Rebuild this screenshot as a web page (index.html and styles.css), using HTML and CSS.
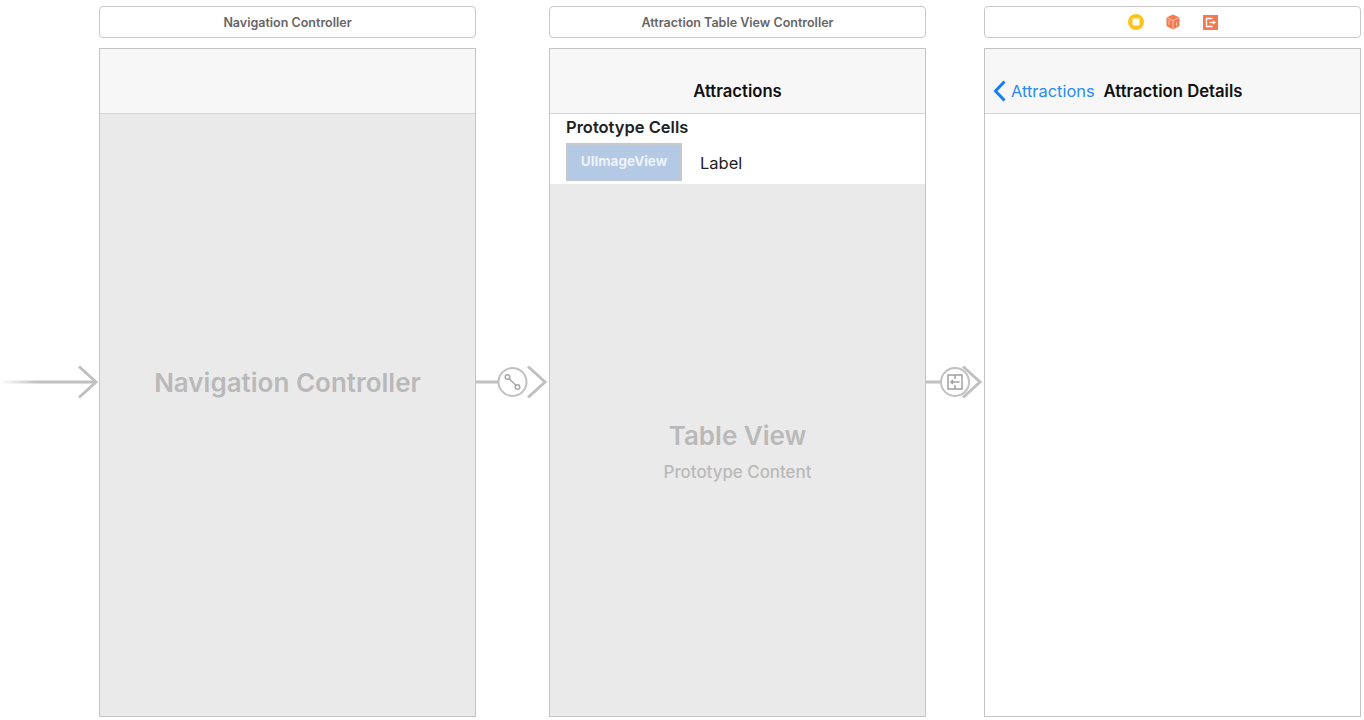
FILE: index.html
```html
<!DOCTYPE html>
<html lang="en">
<head>
  <meta charset="UTF-8" />
  <title>Storyboard</title>
  <link rel="stylesheet" href="styles.css">
</head>
<body>
  <div class="canvas">

    <!-- Entry arrow -->
    <div class="segue segue-entry">
      <svg width="99" height="40" viewBox="0 0 99 40">
        <defs>
          <linearGradient id="fade" x1="0" x2="1" y1="0" y2="0">
            <stop offset="0" stop-color="#c0c0c0" stop-opacity="0"/>
            <stop offset="0.4" stop-color="#c0c0c0"/>
          </linearGradient>
        </defs>
        <rect x="0" y="18.500" width="95" height="3" fill="url(#fade)"/>
        <path d="M79 4.500 L96 20 L79 35.500" fill="none" stroke="#c0c0c0" stroke-width="3"/>
      </svg>
    </div>

    <!-- Navigation Controller -->
    <div class="scene">
      <div class="scene-title">Navigation Controller</div>
      <div class="screen">
        <div class="navbar"></div>
        <div class="placeholder placeholder-nav">
          <div class="placeholder-big">Navigation Controller</div>
        </div>
      </div>
    </div>

    <div class="segue segue-push">
      <svg width="73" height="40" viewBox="0 0 73 40">
        <rect x="0" y="18.500" width="22" height="3" fill="#c0c0c0"/>
        <circle cx="36.500" cy="20" r="14" fill="#fff" stroke="#c0c0c0" stroke-width="2"/>
        <circle cx="31.500" cy="15" r="2.300" fill="none" stroke="#a8a8a8" stroke-width="1.500"/>
        <circle cx="41.500" cy="25" r="2.300" fill="none" stroke="#a8a8a8" stroke-width="1.500"/>
        <path d="M33.200 16.700 L39.800 23.300" stroke="#a8a8a8" stroke-width="1.500"/>
        <path d="M52 4.500 L69 20 L52 35.500" fill="none" stroke="#c0c0c0" stroke-width="3"/>
      </svg>
    </div>

    <!-- Attraction Table View Controller -->
    <div class="scene">
      <div class="scene-title">Attraction Table View Controller</div>
      <div class="screen">
        <div class="navbar">
          <span class="nav-title">Attractions</span>
        </div>
        <div class="cells">
          <div class="cells-head">Prototype Cells</div>
          <div class="cell">
            <div class="image-view">UIImageView</div>
            <div class="cell-label">Label</div>
          </div>
        </div>
        <div class="placeholder placeholder-table">
          <div class="placeholder-big">Table View</div>
          <div class="placeholder-small">Prototype Content</div>
        </div>
      </div>
    </div>

    <div class="segue segue-show">
      <svg width="58" height="40" viewBox="0 0 58 40">
        <rect x="0" y="18.500" width="16" height="3" fill="#c0c0c0"/>
        <path d="M37 4.500 L54 20 L37 35.500" fill="none" stroke="#c0c0c0" stroke-width="3"/>
        <circle cx="29" cy="20" r="14" fill="#fff" stroke="#c0c0c0" stroke-width="2"/>
        <rect x="22" y="13" width="14" height="14" fill="none" stroke="#a0a0a0" stroke-width="1.500"/>
        <path d="M29 13 V17 M29 23 V27 M33.500 20 H25 M27 18 L25 20 L27 22" fill="none" stroke="#a0a0a0" stroke-width="1.500"/>
      </svg>
    </div>

    <!-- Attraction Details -->
    <div class="scene">
      <div class="scene-title scene-icons">
        <svg width="16" height="16" viewBox="0 0 16 16">
          <circle cx="8" cy="8" r="8" fill="#fcc419"/>
          <rect x="4.500" y="4.500" width="7" height="7" rx="1" fill="#fff"/>
        </svg>
        <svg width="16" height="16" viewBox="0 0 16 16">
          <path d="M8 0.500 L14.500 3.500 V12 L8 15.500 L1.500 12 V3.500 Z" fill="#f5794f"/>
          <path d="M1.500 3.500 L8 6.500 L14.500 3.500 M8 6.500 V15.500 M4 6 V11 M11.500 8 V12" fill="none" stroke="#fbd3c4" stroke-width="0.800"/>
        </svg>
        <svg class="icon-exit" width="15" height="15" viewBox="0 0 15 15">
          <rect width="15" height="15" fill="#f5794f"/>
          <path d="M9.500 3.500 H3.500 V11.500 H9.500" fill="none" stroke="#fff" stroke-width="1.300"/>
          <path d="M6.500 7.500 H10.500" stroke="#fff" stroke-width="1.300"/>
          <path d="M10 5.500 L13 7.500 L10 9.500 Z" fill="#fff"/>
        </svg>
      </div>
      <div class="screen screen-white">
        <div class="navbar navbar-back">
          <svg class="back-chevron" width="14" height="22" viewBox="0 0 14 22">
            <path d="M11.500 1.500 L2.500 11 L11.500 20.500" fill="none" stroke="#147efb" stroke-width="3"/>
          </svg>
          <span class="back-text">Attractions</span>
          <span class="nav-title">Attraction Details</span>
        </div>
      </div>
    </div>

  </div>
</body>
</html>
```

FILE: styles.css
```css
html, body {
  margin: 0;
  height: 720px;
  overflow: hidden;
  background: #fff;
  font-family: Inter, "Liberation Sans", sans-serif;
}
.canvas {
  display: flex;
  align-items: flex-start;
  padding-top: 6px;
}
.scene {
  width: 377px;
  flex: none;
  display: flex;
  flex-direction: column;
  gap: 10px;
}
.scene-title {
  box-sizing: border-box;
  height: 32px;
  border: 1px solid #c8c8c8;
  border-radius: 4px;
  display: flex;
  align-items: center;
  justify-content: center;
  padding-top: 1px;
  font-size: 12.500px;
  font-weight: 600;
  color: #666;
}
.scene-icons {
  gap: 21px;
  padding-top: 0;
}
.icon-exit {
  margin-left: 1px;
}
.screen {
  box-sizing: border-box;
  height: 669px;
  border: 1px solid #c4c4c4;
  background: #eaeaea;
  display: flex;
  flex-direction: column;
}
.screen-white {
  background: #fff;
}
.navbar {
  box-sizing: border-box;
  height: 65px;
  flex: none;
  background: #f7f7f7;
  border-bottom: 1px solid #d6d6d6;
  display: flex;
  align-items: flex-end;
  justify-content: center;
  padding-bottom: 12px;
}
.nav-title {
  font-size: 16.700px;
  font-weight: 600;
  line-height: 20px;
  color: #111;
}
.navbar-back {
  justify-content: flex-start;
  padding-left: 8px;
}
.back-chevron {
  margin-bottom: -1px;
  margin-right: 4px;
}
.back-text {
  font-size: 16.400px;
  line-height: 20px;
  color: #2a8af0;
  margin-right: 9px;
}
.cells {
  background: #fff;
  height: 70px;
  flex: none;
  padding-left: 16px;
}
.cells-head {
  font-size: 16.500px;
  font-weight: 600;
  line-height: 20px;
  padding-top: 3px;
  color: #222;
}
.cell {
  display: flex;
  align-items: center;
  margin-top: 6px;
}
.image-view {
  box-sizing: border-box;
  width: 116px;
  height: 38px;
  background: #b3c9e4;
  border: 2px solid #c5c9cf;
  color: #eef3fa;
  font-size: 13.500px;
  font-weight: 700;
  display: flex;
  align-items: center;
  justify-content: center;
  padding-bottom: 2px;
}
.cell-label {
  margin-left: 18px;
  padding-top: 2px;
  font-size: 16.500px;
  color: #222;
}
.placeholder {
  box-sizing: border-box;
  flex: 1;
  display: flex;
  flex-direction: column;
  align-items: center;
  justify-content: center;
  color: #b9b9b9;
}
.placeholder-nav {
  padding-bottom: 65px;
}
.placeholder-table {
  padding-top: 2px;
}
.placeholder-big {
  font-size: 26px;
  font-weight: 600;
  line-height: 32px;
}
.placeholder-small {
  font-size: 16.900px;
  font-weight: 500;
  line-height: 20px;
  margin-top: 10px;
}
.segue {
  flex: none;
  box-sizing: border-box;
  height: 669px;
  margin-top: 42px;
  padding-bottom: 1px;
  display: flex;
  align-items: center;
}
.segue svg {
  display: block;
}
.segue-entry {
  width: 99px;
}
.segue-push {
  width: 73px;
}
.segue-show {
  width: 58px;
}
```
